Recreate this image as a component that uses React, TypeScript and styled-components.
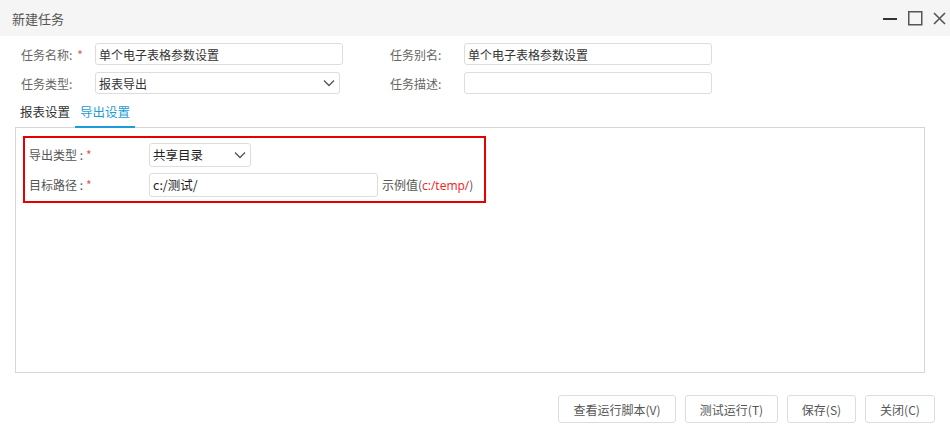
import styled, { createGlobalStyle } from "styled-components";

const GlobalStyle = createGlobalStyle`
    body {
        margin: 0;
        background: #fff;
        font-family: "Noto Sans CJK SC", "Noto Sans", sans-serif;
        font-size: 12px;
        color: #555;
    }
`;

const Dialog = styled.div`
    width: 950px;
    height: 438px;
    background: #fff;
    box-sizing: border-box;
`;

const TitleBar = styled.div`
    height: 36px;
    background: #f5f5f5;
    display: flex;
    align-items: center;
    justify-content: space-between;
    padding: 0 4px 0 12px;
`;

const Title = styled.span`
    font-size: 13px;
    color: #555;
`;

const WinButtons = styled.div`
    display: flex;
    align-items: center;
    gap: 10px;
`;

const BaseForm = styled.div`
    display: grid;
    grid-template-columns: 74px 248px 47px 74px 248px;
    grid-auto-rows: 22px;
    row-gap: 7px;
    align-items: center;
    padding: 7px 0 0 21px;
`;

const Label = styled.span`
    color: #666;
    white-space: nowrap;
`;

const Star = styled.span<{ $gap?: number }>`
    color: #f25050;
    margin-left: ${(p) => p.$gap ?? 5}px;
`;

const TextInput = styled.div<{ $w?: number }>`
    height: 22px;
    width: ${(p) => (p.$w ? `${p.$w}px` : "100%")};
    box-sizing: border-box;
    border: 1px solid #ddd;
    border-radius: 3px;
    display: flex;
    align-items: center;
    justify-content: space-between;
    padding: 0 4px 0 3px;
    color: #333;
    background: #fff;
`;

const Tabs = styled.div`
    display: flex;
    margin: 6px 0 0 15px;
    height: 27px;
    align-items: flex-end;
`;

const Tab = styled.div<{ $active?: boolean }>`
    padding: 0 5px 5px;
    font-size: 12.5px;
    color: ${(p) => (p.$active ? "#1e9cd7" : "#333")};
    border-bottom: 2px solid ${(p) => (p.$active ? "#1e9cd7" : "transparent")};
    margin-bottom: -1px;
`;

const Panel = styled.div`
    margin-left: 15px;
    width: 910px;
    height: 246px;
    box-sizing: border-box;
    border: 1px solid #d6d6d6;
    padding: 8px 0 0 7px;
`;

const Highlight = styled.div`
    width: 463px;
    height: 67px;
    box-sizing: border-box;
    border: 2px solid #e60000;
    display: grid;
    grid-template-columns: 120px auto auto;
    grid-auto-rows: 24px;
    row-gap: 6px;
    align-content: center;
    align-items: center;
    justify-content: start;
    padding-left: 4px;
`;

const FieldLabel = styled.span`
    color: #555;
`;

const BoxInput = styled(TextInput)`
    height: 24px;
    color: #222;
    font-size: 12.5px;
`;

const Hint = styled.span`
    margin-left: 4px;
    color: #555;
    white-space: nowrap;
`;

const Red = styled.span`
    color: #f02020;
    font-family: "Open Sans", "Noto Sans", sans-serif;
`;

const Footer = styled.div`
    display: flex;
    justify-content: flex-end;
    gap: 9px;
    padding: 22px 15px 0 0;
`;

const Button = styled.button<{ $w: number }>`
    width: ${(p) => p.$w}px;
    height: 28px;
    border: 1px solid #ddd;
    border-radius: 3px;
    background: #fff;
    font-family: inherit;
    font-size: 12px;
    color: #555;
    padding: 0;
`;

const Chevron = () => (
    <svg width="12" height="8" viewBox="0 0 12 8">
        <path d="M1 1.5 L6 6.5 L11 1.5" stroke="#555" strokeWidth="1.3" fill="none" />
    </svg>
);

export default function App() {
    return (
        <>
            <GlobalStyle />
            <Dialog>
                <TitleBar>
                    <Title>新建任务</Title>
                    <WinButtons>
                        <svg width="15" height="15" viewBox="0 0 15 15">
                            <path d="M0 8 H14" stroke="#333" strokeWidth="2" />
                        </svg>
                        <svg width="15" height="15" viewBox="0 0 15 15">
                            <rect x="0.75" y="0.75" width="13" height="13" stroke="#555" strokeWidth="1.5" fill="none" />
                        </svg>
                        <svg width="13" height="13" viewBox="0 0 13 13">
                            <path d="M1 1 L12 12 M12 1 L1 12" stroke="#555" strokeWidth="1.6" />
                        </svg>
                    </WinButtons>
                </TitleBar>

                <BaseForm>
                    <Label>
                        任务名称:<Star>*</Star>
                    </Label>
                    <TextInput>单个电子表格参数设置</TextInput>
                    <span />
                    <Label>任务别名:</Label>
                    <TextInput>单个电子表格参数设置</TextInput>

                    <Label>任务类型:</Label>
                    <TextInput $w={245}>
                        报表导出
                        <Chevron />
                    </TextInput>
                    <span />
                    <Label>任务描述:</Label>
                    <TextInput />
                </BaseForm>

                <Tabs>
                    <Tab>报表设置</Tab>
                    <Tab $active>导出设置</Tab>
                </Tabs>

                <Panel>
                    <Highlight>
                        <FieldLabel>
                            导出类型 :<Star $gap={3}>*</Star>
                        </FieldLabel>
                        <BoxInput $w={102}>
                            共享目录
                            <Chevron />
                        </BoxInput>
                        <span />

                        <FieldLabel>
                            目标路径 :<Star $gap={3}>*</Star>
                        </FieldLabel>
                        <BoxInput $w={229}>c:/测试/</BoxInput>
                        <Hint>
                            示例值(<Red>c:/temp/</Red>)
                        </Hint>
                    </Highlight>
                </Panel>

                <Footer>
                    <Button $w={118}>查看运行脚本(V)</Button>
                    <Button $w={93}>测试运行(T)</Button>
                    <Button $w={69}>保存(S)</Button>
                    <Button $w={70}>关闭(C)</Button>
                </Footer>
            </Dialog>
        </>
    );
}
